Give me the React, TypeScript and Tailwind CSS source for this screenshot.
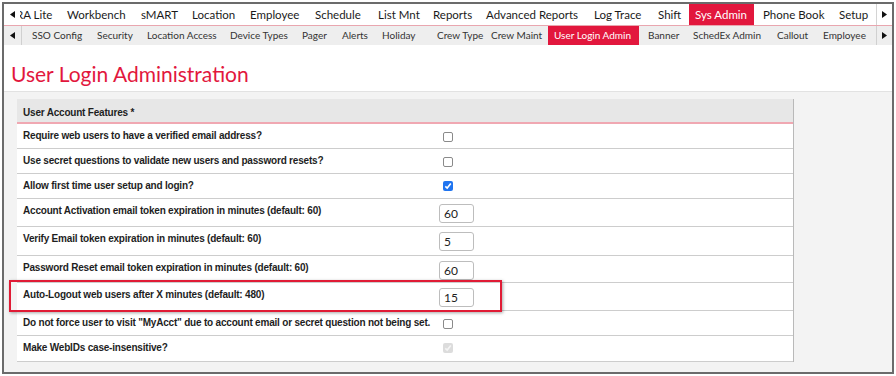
import React from 'react';

type NavItem = { label: string; w: string; pl?: string; active?: boolean };

const topItems: NavItem[] = [
  { label: 'RA Lite', w: 'w-[51px]' },
  { label: 'Workbench', w: 'w-[74px]' },
  { label: 'sMART', w: 'w-[51px]' },
  { label: 'Location', w: 'w-[58px]' },
  { label: 'Employee', w: 'w-[65px]' },
  { label: 'Schedule', w: 'w-[63px]' },
  { label: 'List Mnt', w: 'w-[55px]' },
  { label: 'Reports', w: 'w-[53px]' },
  { label: 'Advanced Reports', w: 'w-[108px]' },
  { label: 'Log Trace', w: 'w-[64px]' },
  { label: 'Shift', w: 'w-[37px]' },
  { label: 'Sys Admin', w: 'w-[65px]', active: true },
  { label: 'Phone Book', w: 'w-[79px]', pl: 'pl-[9px]' },
  { label: 'Setup', w: 'w-[43px]' },
];

const subItems: NavItem[] = [
  { label: 'SSO Config', w: 'w-[65px]' },
  { label: 'Security', w: 'w-[50px]' },
  { label: 'Location Access', w: 'w-[83px]' },
  { label: 'Device Types', w: 'w-[72px]' },
  { label: 'Pager', w: 'w-[40px]' },
  { label: 'Alerts', w: 'w-[40px]' },
  { label: 'Holiday', w: 'w-[55px]' },
  { label: 'Crew Type', w: 'w-[54px]' },
  { label: 'Crew Maint', w: 'w-[63px]' },
  { label: 'User Login Admin', w: 'w-[91px]', active: true },
  { label: 'Banner', w: 'w-[48px]', pl: 'pl-[9px]' },
  { label: 'SchedEx Admin', w: 'w-[84px]' },
  { label: 'Callout', w: 'w-[46px]' },
  { label: 'Employee', w: 'w-[59px]' },
];

type Row = {
  label: string;
  h: string;
  kind: 'check' | 'checked' | 'disabled' | 'input';
  value?: string;
};

const rows: Row[] = [
  { label: 'Require web users to have a verified email address?', h: 'h-[25px]', kind: 'check' },
  { label: 'Use secret questions to validate new users and password resets?', h: 'h-[25px]', kind: 'check' },
  { label: 'Allow first time user setup and login?', h: 'h-[25px]', kind: 'checked' },
  { label: 'Account Activation email token expiration in minutes (default: 60)', h: 'h-[28px]', kind: 'input', value: '60' },
  { label: 'Verify Email token expiration in minutes (default: 60)', h: 'h-[29px]', kind: 'input', value: '5' },
  { label: 'Password Reset email token expiration in minutes (default: 60)', h: 'h-[27px]', kind: 'input', value: '60' },
  { label: 'Auto-Logout web users after X minutes (default: 480)', h: 'h-[28px]', kind: 'input', value: '15' },
  { label: 'Do not force user to visit "MyAcct" due to account email or secret question not being set.', h: 'h-[25px]', kind: 'check' },
  { label: 'Make WebIDs case-insensitive?', h: 'h-[26px]', kind: 'disabled' },
];

function Arrow({ dir }: { dir: 'left' | 'right' }) {
  return (
    <svg width="5" height="7" viewBox="0 0 5 7" className="block">
      {dir === 'left' ? <path d="M5 0 L0 3.5 L5 7 Z" fill="#111" /> : <path d="M0 0 L5 3.5 L0 7 Z" fill="#111" />}
    </svg>
  );
}

function Check({ kind }: { kind: Row['kind'] }) {
  if (kind === 'check') {
    return <div className="mt-[8px] ml-[4px] h-[10px] w-[10px] rounded-[2px] border border-[#8a8a8a] bg-white" />;
  }
  const disabled = kind === 'disabled';
  return (
    <div
      className={`mt-[7px] ml-[4px] flex h-[10px] w-[10px] items-center justify-center rounded-[2px] ${
        disabled ? 'bg-[#dcdcdc]' : 'bg-[#1f74f0]'
      }`}
    >
      <svg width="8" height="8" viewBox="0 0 8 8">
        <path d="M1.3 4.3 L3.2 6.1 L6.8 1.6" fill="none" stroke={disabled ? '#f4f4f4' : '#fff'} strokeWidth="1.6" />
      </svg>
    </div>
  );
}

export default function App() {
  return (
    <div className="relative h-[376px] w-[896px] bg-white pt-[2px] pl-[2px] font-['Lato',sans-serif]">
      <div className="flex h-[372px] w-[892px] flex-col border-2 border-[#6b6b6b] bg-[#f3f3f3]">
        {/* main nav */}
        <div className="flex h-[22px] shrink-0 items-stretch border-b border-[#e9a6af] bg-white text-[11.5px] text-[#1a1a1a]">
          <div className="flex w-[16px] items-center justify-center">
            <Arrow dir="left" />
          </div>
          <div className="flex flex-1 overflow-hidden">
            <div className="-ml-[10px] flex">
              {topItems.map((it) => (
                <div
                  key={it.label}
                  className={`flex shrink-0 items-center whitespace-nowrap ${it.w} ${it.pl ?? 'pl-[6px]'} ${
                    it.active ? 'bg-[#e2173d] text-white' : ''
                  }`}
                >
                  {it.label}
                </div>
              ))}
            </div>
          </div>
          <div className="flex w-[16px] items-center justify-center border-l border-[#d4d4d4]">
            <Arrow dir="right" />
          </div>
        </div>

        {/* sub nav */}
        <div className="flex h-[19px] shrink-0 items-stretch bg-[#eeeeee] text-[10px] text-[#333]">
          <div className="flex w-[18px] items-center justify-center border-r border-[#d0d0d0]">
            <Arrow dir="left" />
          </div>
          <div className="flex flex-1 overflow-hidden">
            <div className="ml-[4px] flex">
              {subItems.map((it) => (
                <div
                  key={it.label}
                  className={`flex shrink-0 items-center whitespace-nowrap ${it.w} ${it.pl ?? 'pl-[6px]'} ${
                    it.active ? 'bg-[#e2173d] text-white' : ''
                  }`}
                >
                  {it.label}
                </div>
              ))}
            </div>
          </div>
          <div className="flex w-[16px] items-center justify-center border-l border-[#d0d0d0]">
            <Arrow dir="right" />
          </div>
        </div>

        {/* title */}
        <div className="h-[47px] shrink-0 border-b border-[#e2e2e2] bg-white pl-[7px] pt-[16px]">
          <h1 className="text-[21px] leading-[26px] text-[#e2173d]">User Login Administration</h1>
        </div>

        {/* content */}
        <div className="flex-1 pl-[13px] pt-[7px]">
          <div className="w-[777px] border-r border-[#b9b9b9] bg-white font-['Liberation_Sans',sans-serif] text-[10px] font-bold tracking-[-0.2px] text-[#1e1e1e]">
            <div className="h-[25px] border-b-2 border-[#f0a8b2] bg-[#e7e7e7] pl-[6px] pt-[8px] leading-[12px]">
              User Account Features *
            </div>
            {rows.map((r) => (
              <div key={r.label} className={`flex border-b border-[#cdcdcd] ${r.h}`}>
                <div className="w-[422px] shrink-0 pl-[6px] pt-[6px] leading-[12px] whitespace-nowrap">{r.label}</div>
                <div>
                  {r.kind === 'input' ? (
                    <div className="mt-[5px] flex h-[19px] w-[35px] items-center rounded-[3px] border border-[#bdbdbd] bg-white pl-[4px] font-['Lato',sans-serif] text-[12px] font-normal tracking-normal text-[#222]">
                      {r.value}
                    </div>
                  ) : (
                    <Check kind={r.kind} />
                  )}
                </div>
              </div>
            ))}
          </div>
        </div>
      </div>

      {/* highlight box */}
      <div className="absolute left-[9px] top-[280px] h-[32px] w-[493px] border-2 border-[#e01b35] shadow-[1px_1px_3px_rgba(0,0,0,0.35)]" />
    </div>
  );
}
